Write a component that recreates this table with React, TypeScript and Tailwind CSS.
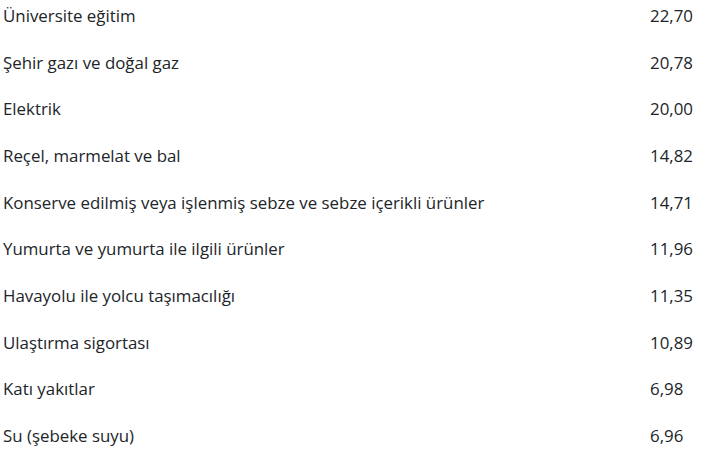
const rows: [string, string][] = [
  ['Üniversite eğitim', '22,70'],
  ['Şehir gazı ve doğal gaz', '20,78'],
  ['Elektrik', '20,00'],
  ['Reçel, marmelat ve bal', '14,82'],
  ['Konserve edilmiş veya işlenmiş sebze ve sebze içerikli ürünler', '14,71'],
  ['Yumurta ve yumurta ile ilgili ürünler', '11,96'],
  ['Havayolu ile yolcu taşımacılığı', '11,35'],
  ['Ulaştırma sigortası', '10,89'],
  ['Katı yakıtlar', '6,98'],
  ['Su (şebeke suyu)', '6,96'],
]

export default function App() {
  return (
    <div className="min-h-screen bg-white font-['Open_Sans',sans-serif] text-[16.86px] text-[#212529]">
      <div className="flex flex-col">
        {rows.map(([name, value]) => (
          <div key={name} className="flex h-[46.67px] items-start pt-[4px] leading-[24px]">
            <span className="w-[650px] pl-[3px]">{name}</span>
            <span>{value}</span>
          </div>
        ))}
      </div>
    </div>
  )
}
